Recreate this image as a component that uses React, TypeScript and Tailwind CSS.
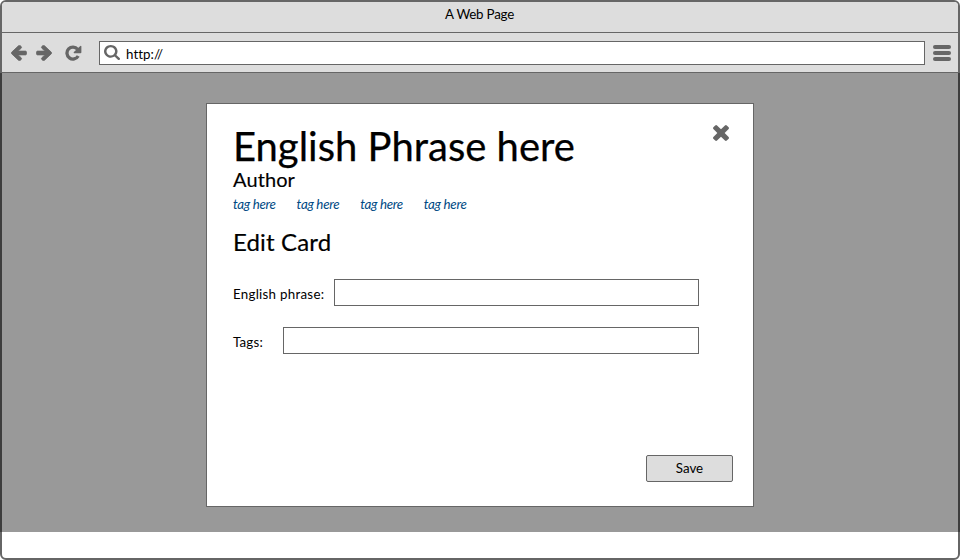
import React from "react";

type IconProps = { box: string; d: string; className: string; weight?: number };

function Icon({ box, d, className, weight = 0 }: IconProps) {
  return (
    <svg
      viewBox={box}
      preserveAspectRatio="none"
      fill="#666"
      stroke="#666"
      strokeWidth={weight}
      strokeLinejoin="round"
      className={`block shrink-0 ${className}`}
    >
      <path d={d} />
    </svg>
  );
}

const LEFT =
  "M1664 896v128q0 53-32.5 90.5t-84.5 37.5h-704l293 294q38 36 38 90t-38 90l-75 76q-37 37-90 37-52 0-91-37l-651-652q-37-37-37-90 0-52 37-91l651-650q38-38 91-38 52 0 90 38l75 74q38 38 38 91t-38 91l-293 293h704q52 0 84.5 37.5t32.5 90.5z";
const RIGHT =
  "M1600 960q0 54-37 91l-651 651q-39 37-91 37-51 0-90-37l-75-75q-38-38-38-91t38-91l293-293h-704q-52 0-84.5-37.5t-32.5-90.5v-128q0-53 32.5-90.5t84.5-37.5h704l-293-294q-38-36-38-90t38-90l75-75q38-38 90-38 53 0 91 38l651 651q37 35 37 90z";
const SEARCH =
  "M1216 832q0-185-131.5-316.5t-316.5-131.5-316.5 131.5-131.5 316.5 131.5 316.5 316.5 131.5 316.5-131.5 131.5-316.5zm512 832q0 52-38 90t-90 38q-54 0-90-38l-343-342q-179 124-399 124-143 0-273.5-55.5t-225-150-150-225-55.5-273.5 55.5-273.5 150-225 225-150 273.5-55.5 273.5 55.5 225 150 150 225 55.5 273.5q0 220-124 399l343 343q37 37 37 90z";
const CLOSE =
  "M1490 1322q0 40-28 68l-136 136q-28 28-68 28t-68-28l-294-294-294 294q-28 28-68 28t-68-28l-136-136q-28-28-28-68t28-68l294-294-294-294q-28-28-28-68t28-68l136-136q28-28 68-28t68 28l294 294 294-294q28-28 68-28t68 28l136 136q28 28 28 68t-28 68l-294 294 294 294q28 28 28 68z";

const TAGS = ["tag here", "tag here", "tag here", "tag here"];

export default function App() {
  return (
    <div className="relative flex h-[560px] w-[960px] flex-col rounded-[6px] border-2 border-[#666] bg-white font-['Lato',sans-serif] text-[13.33px] leading-4 text-black">
      <header className="flex h-[31px] shrink-0 justify-center rounded-t-[4px] border-b border-[#666] bg-[#ddd] pt-[4px]">
        <span className="mr-[1px] tracking-[-0.2px]">A Web Page</span>
      </header>
      <nav className="flex h-[40px] shrink-0 items-center border-b border-[#666] bg-[#ddd] pl-[9px]">
        <Icon box="152 141 1552 1638" d={LEFT} weight={80} className="h-4 w-4" />
        <Icon box="88 141 1552 1638" d={RIGHT} weight={80} className="ml-[9px] h-4 w-4" />
        <svg viewBox="0 0 17 16" className="ml-[13px] block h-4 w-[17px] shrink-0">
          <path d="M12.6 4.2A6 6 0 1 0 13.2 11" fill="none" stroke="#666" strokeWidth="3.3" />
          <path d="M16.4 1.2V7.2Q16.4 8.2 15.4 8.2H9.2Q8.1 7.9 8.9 7L15 1.2Q16 .3 16.4 1.2z" fill="#666" />
        </svg>
        <div className="ml-[17px] flex h-6 w-[826px] items-center border border-[#666] bg-white pl-[4px]">
          <Icon box="64 128 1664 1664" d={SEARCH} className="mb-[1px] h-[15px] w-4" />
          <span className="ml-[6px] mt-[3px] tracking-[0.05px]">http://</span>
        </div>
        <div className="ml-2 flex flex-col gap-[2px]">
          <i className="h-1 w-[18px] rounded-[2px] bg-[#666]" />
          <i className="h-1 w-[18px] rounded-[2px] bg-[#666]" />
          <i className="h-1 w-[18px] rounded-[2px] bg-[#666]" />
        </div>
      </nav>

      {/* Dimming layer, spread over the window frame as well */}
      <div className="absolute -left-[2px] top-[71px] flex h-[459px] w-[960px] justify-center bg-black/40 pt-[30px]">
        <section className="flex h-[404px] w-[548px] flex-col border border-[#666] bg-white pl-[26px] pr-5">
          <div className="flex h-[63px] justify-between">
            <h1 className="whitespace-nowrap pt-[22px] text-[40px] leading-[40px] [-webkit-text-stroke:0.25px]">English Phrase here</h1>
            <Icon box="302 366 1188 1188" d={CLOSE} className="mr-[4px] mt-[21px] h-4 w-4" />
          </div>
          <h2 className="text-[20px] leading-6 tracking-[0.1px] [-webkit-text-stroke:0.15px]">Author</h2>
          <ul className="mt-[5px] flex text-[13.33px] italic tracking-[-0.3px] text-[#004a84]">
            {TAGS.map((tag, i) => (
              <li key={i} className="w-[63.6px]">{tag}</li>
            ))}
          </ul>
          <h3 className="mt-[15px] text-[24px] leading-[29px] tracking-[0.15px] [-webkit-text-stroke:0.2px]">Edit Card</h3>
          <label className="mt-[23px] flex h-[27px] w-[466px] justify-between">
            <span className="pt-[7px] tracking-[0.27px]">English phrase:</span>
            <input className="h-[27px] w-[365px] border border-[#666] bg-white" />
          </label>
          <label className="mt-[21px] flex h-[27px] w-[466px] justify-between">
            <span className="pt-[7px] tracking-[0.2px]">Tags:</span>
            <input className="h-[27px] w-[416px] border border-[#666] bg-white" />
          </label>
          <button className="mt-[101px] h-[27px] w-[87px] self-end rounded-[2px] border border-[#666] bg-[#ddd] pb-[2px]">Save</button>
        </section>
      </div>
    </div>
  );
}
